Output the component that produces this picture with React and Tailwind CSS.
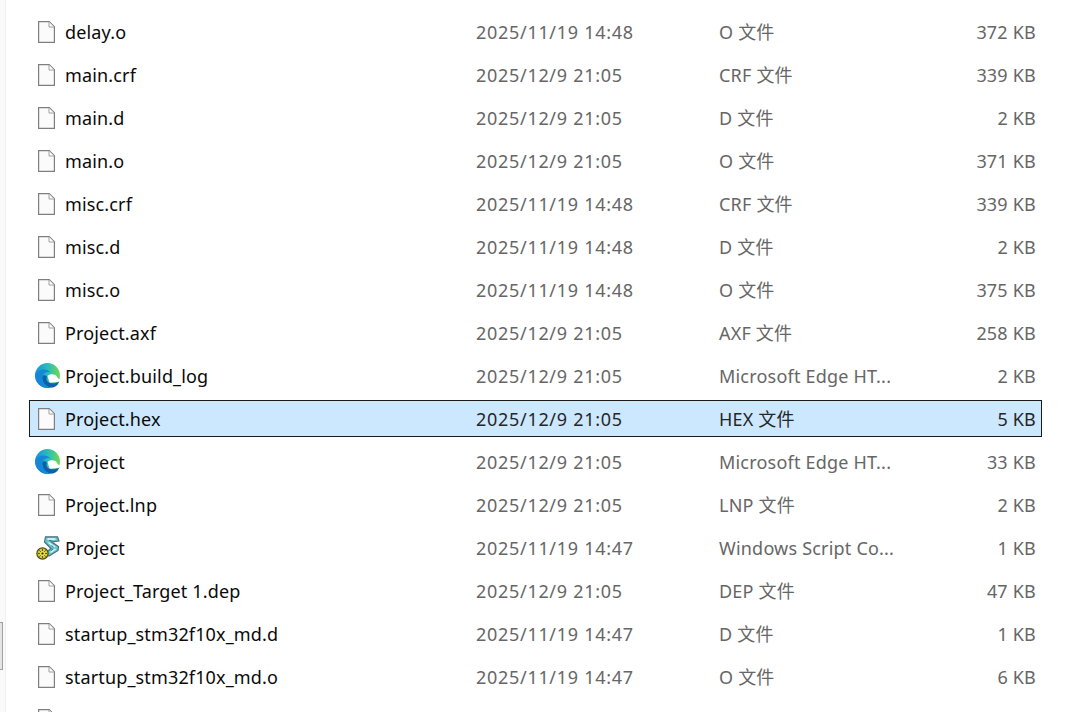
import React from "react";

const files = [
  { name: "delay.o", date: "2025/11/19 14:48", type: "O 文件", size: "372 KB", icon: "file" },
  { name: "main.crf", date: "2025/12/9 21:05", type: "CRF 文件", size: "339 KB", icon: "file" },
  { name: "main.d", date: "2025/12/9 21:05", type: "D 文件", size: "2 KB", icon: "file" },
  { name: "main.o", date: "2025/12/9 21:05", type: "O 文件", size: "371 KB", icon: "file" },
  { name: "misc.crf", date: "2025/11/19 14:48", type: "CRF 文件", size: "339 KB", icon: "file" },
  { name: "misc.d", date: "2025/11/19 14:48", type: "D 文件", size: "2 KB", icon: "file" },
  { name: "misc.o", date: "2025/11/19 14:48", type: "O 文件", size: "375 KB", icon: "file" },
  { name: "Project.axf", date: "2025/12/9 21:05", type: "AXF 文件", size: "258 KB", icon: "file" },
  { name: "Project.build_log", date: "2025/12/9 21:05", type: "Microsoft Edge HT...", size: "2 KB", icon: "edge" },
  { name: "Project.hex", date: "2025/12/9 21:05", type: "HEX 文件", size: "5 KB", icon: "file", selected: true },
  { name: "Project", date: "2025/12/9 21:05", type: "Microsoft Edge HT...", size: "33 KB", icon: "edge" },
  { name: "Project.lnp", date: "2025/12/9 21:05", type: "LNP 文件", size: "2 KB", icon: "file" },
  { name: "Project", date: "2025/11/19 14:47", type: "Windows Script Co...", size: "1 KB", icon: "script" },
  { name: "Project_Target 1.dep", date: "2025/12/9 21:05", type: "DEP 文件", size: "47 KB", icon: "file" },
  { name: "startup_stm32f10x_md.d", date: "2025/11/19 14:47", type: "D 文件", size: "1 KB", icon: "file" },
  { name: "startup_stm32f10x_md.o", date: "2025/11/19 14:47", type: "O 文件", size: "6 KB", icon: "file" },
  { name: "", date: "", type: "", size: "", icon: "file" },
];

const FileIcon = () => (
  <svg width="17" height="22" viewBox="0 0 17 22" className="shrink-0 ml-[4px]">
    <path d="M.6 .6H11.2L16.4 5.8V21.4H.6Z" fill="#fbfbfb" stroke="#7f7f7f" strokeWidth="1.2" />
    <path d="M11 1V6H16" fill="#ffffff" stroke="#a0a0a0" strokeWidth="1" />
  </svg>
);

const EdgeIcon = () => (
  <svg width="25" height="25" viewBox="0 0 24 24" className="shrink-0 ml-[1px]">
    <defs>
      <linearGradient id="edgeTop" x1="0" y1="0.5" x2="1" y2="0.5">
        <stop offset="0" stopColor="#1a8fe0" />
        <stop offset="0.55" stopColor="#2cc0b4" />
        <stop offset="1" stopColor="#6fd94f" />
      </linearGradient>
    </defs>
    <circle cx="12" cy="12" r="12" fill="url(#edgeTop)" />
    <path d="M12 12.5C14 10 19.5 10 21 13 21.5 14.5 23 15.5 24 15.5L23.5 18 14 19Z" fill="#ffffff" />
    <path d="M7 13C6.5 18 10 23 15 23.5 19 24 22 21.5 23.5 17.5 21 19.5 17 20 14 19 11 18 10.5 15 11.5 13 10 11.5 7.5 11.5 7 13Z" fill="#0f5fae" />
    <path d="M.1 11C0 18 5 24 12 24 13 24 14 23.9 15 23.7 10 23 6.5 18 7 13.5 7.3 10 11 7.5 15 9 11 5 3.5 5 .1 11Z" fill="#1487d8" />
  </svg>
);

const ScriptIcon = () => (
  <svg width="24" height="24" viewBox="0 0 24 24" className="shrink-0 ml-[2px]">
    <path d="M9.5 .8H21.5L23 5 15.5 5.8 22.5 10.5 22 14.5 13 20 9 17.5 15 12.5 8.5 6Z" fill="#62c8d2" stroke="#4d6f78" strokeWidth="1.2" />
    <path d="M11.5 3H19.5M12.5 6.5L19 11M14.5 16.5L19.5 13" stroke="#eafafa" strokeWidth="1.4" fill="none" />
    <path d="M13 4.5H15.5M15.5 9.5L17.5 11M15 14.5L17 13" stroke="#2f7f8c" strokeWidth="1" fill="none" />
    <circle cx="6.5" cy="17.5" r="6.2" fill="#4a4a14" />
    <circle cx="6.5" cy="17.5" r="5" fill="#d8cb3a" />
    <path d="M6.5 13V22M2 17.5H11M3.3 14.3L9.7 20.7M9.7 14.3L3.3 20.7" stroke="#5c5a14" strokeWidth="1" />
    <circle cx="6.5" cy="17.5" r="2.6" fill="#e6da55" />
    <circle cx="6.5" cy="17.5" r="1.1" fill="#2b2b0c" />
  </svg>
);

const icons = { file: <FileIcon />, edge: <EdgeIcon />, script: <ScriptIcon /> };

const FileRow = ({ file }) => {
  const detail = file.selected ? "text-[#262626]" : "text-[#666666]";
  return (
    <div
      className={`flex items-center h-[37px] w-[1013px] shrink-0 border ${
        file.selected ? "bg-[#cce8ff] border-[#1b1b1b]" : "border-transparent"
      }`}
    >
      <div className="w-[35px] pl-[4px] flex shrink-0">{icons[file.icon]}</div>
      <div className="w-[411px] text-[#0a0a0a] tracking-[0.15px] shrink-0">{file.name}</div>
      <div className={`w-[243px] tracking-[0.7px] shrink-0 ${detail}`}>{file.date}</div>
      <div className={`w-[200px] tracking-[0.2px] shrink-0 ${detail}`}>{file.type}</div>
      <div className={`w-[117px] text-right tracking-[0.2px] shrink-0 ${detail}`}>{file.size}</div>
    </div>
  );
};

export default function App() {
  return (
    <div className="h-[712px] w-[1092px] overflow-hidden bg-white flex font-['Noto_Sans','Noto_Sans_CJK_SC',sans-serif] text-[18px] leading-[24px]">
      <div className="w-[6px] shrink-0 flex flex-col bg-[#fafafa] border-r border-[#f0f0f0]">
        <div className="h-[622px]" />
        <div className="h-[48px] w-[3px] bg-[#e4e4e4] border-y border-r border-[#a0a0a0]" />
      </div>
      <div className="flex flex-col gap-[6px] pt-[13px] pl-[23px]">
        {files.map((file, i) => (
          <FileRow key={i} file={file} />
        ))}
      </div>
    </div>
  );
}
